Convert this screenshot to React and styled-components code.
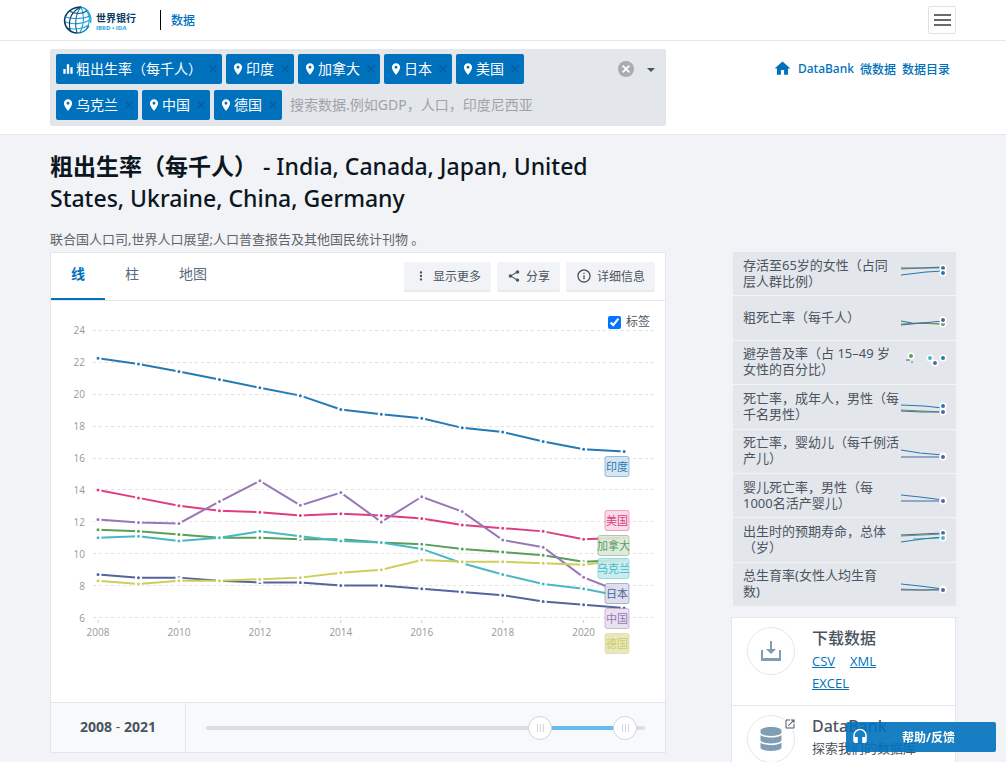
import React, { useState } from "react";
import styled, { createGlobalStyle } from "styled-components";
import {
  MdClose,
  MdEqualizer,
  MdHeadset,
  MdHome,
  MdInfoOutline,
  MdMoreVert,
  MdOpenInNew,
  MdPlace,
  MdShare
} from "react-icons/md";
import { FaDatabase } from "react-icons/fa";

const YEARS = [...Array(14).keys()].map(i => 2008 + i);

// drawn in this order, later ones lie on top
const SERIES = [
  {
    name: "印度",
    color: "#2579b5",
    tint: "#d1e2ee",
    labelY: 156,
    values: [22.25, 21.9, 21.42, 20.92, 20.4, 19.91, 19.04, 18.75, 18.49, 17.89, 17.63, 17.03, 16.55, 16.4]
  },
  {
    name: "加拿大",
    color: "#5a9e57",
    tint: "#dce8db",
    labelY: 235,
    values: [11.5, 11.4, 11.2, 11, 11, 10.9, 10.9, 10.7, 10.6, 10.3, 10.1, 9.9, 9.5, 9.6]
  },
  {
    name: "日本",
    color: "#53659b",
    tint: "#dadeeb",
    labelY: 283,
    values: [8.7, 8.5, 8.5, 8.3, 8.2, 8.2, 8, 8, 7.8, 7.6, 7.4, 7, 6.8, 6.6]
  },
  {
    name: "美国",
    color: "#df3d82",
    tint: "#f6d8e4",
    labelY: 210,
    values: [14, 13.5, 13, 12.7, 12.6, 12.4, 12.5, 12.4, 12.2, 11.8, 11.6, 11.4, 10.9, 11]
  },
  {
    name: "乌克兰",
    color: "#47b8c4",
    tint: "#c3eaee",
    labelY: 258,
    values: [11, 11.1, 10.8, 11, 11.4, 11.1, 10.8, 10.7, 10.3, 9.4, 8.7, 8.1, 7.8, 7.3]
  },
  {
    name: "中国",
    color: "#9877b7",
    tint: "#e6dfee",
    labelY: 308,
    values: [12.14, 11.95, 11.9, 13.27, 14.57, 13.03, 13.83, 11.99, 13.57, 12.64, 10.86, 10.41, 8.52, 7.52]
  },
  {
    name: "德国",
    color: "#cfce5c",
    tint: "#e4e5bd",
    labelY: 333,
    values: [8.3, 8.1, 8.3, 8.3, 8.4, 8.5, 8.8, 9, 9.6, 9.5, 9.5, 9.4, 9.3, 9.6]
  }
];

const RELATED = [
  {
    title: "存活至65岁的女性（占同层人群比例）",
    lines: [["#5a9e57", "1,17 22,16 43,16"], ["#53659b", "1,16 22,16 43,15"], ["#2579b5", "1,23 26,20 43,19"]],
    dots: [["#53659b", 43, 16], ["#2579b5", 43, 21]]
  },
  {
    title: "粗死亡率（每千人）",
    lines: [["#2579b5", "1,24 12,26 43,27"], ["#5a9e57", "1,27 22,26 43,27"], ["#53659b", "1,28 22,26 43,24"]],
    dots: [["#5a9e57", 43, 27], ["#53659b", 43, 23]]
  },
  {
    title: "避孕普及率（占 15–49 岁女性的百分比）",
    lines: [["#53659b", "6,19 10,19"], ["#2579b5", "11,21 13,21"]],
    dots: [["#5a9e57", 11, 15], ["#47b8c4", 30, 17], ["#53659b", 35, 22], ["#2579b5", 43, 17]]
  },
  {
    title: "死亡率，成年人，男性（每千名男性）",
    lines: [["#2579b5", "1,20 24,21 43,23"], ["#5a9e57", "1,25 22,26 43,27"], ["#53659b", "1,26 22,27 43,27"]],
    dots: [["#2579b5", 43, 21], ["#53659b", 43, 27]]
  },
  {
    title: "死亡率，婴幼儿（每千例活产儿）",
    lines: [["#2579b5", "1,20 20,23 43,25"], ["#53659b", "1,27 22,27 43,27"]],
    dots: [["#2579b5", 43, 26], ["#53659b", 43, 27]]
  },
  {
    title: "婴儿死亡率，男性（每1000名活产婴儿）",
    lines: [["#2579b5", "1,21 20,23 43,26"], ["#53659b", "1,27 22,27 43,27"]],
    dots: [["#2579b5", 43, 26], ["#53659b", 43, 27]]
  },
  {
    title: "出生时的预期寿命，总体（岁）",
    lines: [
      ["#5a9e57", "1,18 22,17 43,16"],
      ["#53659b", "1,17 22,16 43,15"],
      ["#47b8c4", "13,21 43,20"],
      ["#2579b5", "1,24 22,21 43,19"]
    ],
    dots: [["#53659b", 43, 15], ["#47b8c4", 43, 20]]
  },
  {
    title: "总生育率(女性人均生育\n数)",
    lines: [["#2579b5", "1,21 20,23 43,26"], ["#5a9e57", "1,26 22,27 43,26"], ["#53659b", "1,27 22,27 43,27"]],
    dots: [["#2579b5", 43, 26], ["#53659b", 43, 27]]
  }
];

const COUNTRIES = ["印度", "加拿大", "日本", "美国", "乌克兰", "中国", "德国"];

const xOf = year => 47 + (year - 2008) * 40.47;
const yOf = value => 316.5 - (value - 6) * 15.95;

const Logo = () => (
  <LogoLink href="/" aria-label="世界银行">
    <svg width="76" height="30" viewBox="0 0 76 30">
      <g fill="none" strokeWidth="1.1">
        <path d="M18 2 A13.2 13.2 0 0 1 27.5 18" stroke="#1ba3dc" strokeWidth="1.3" />
        <path d="M22 4 C27 9 28 16 23 25" stroke="#1ba3dc" />
        <path d="M18 2 C21 8 22 18 17 27" stroke="#1ba3dc" />
        <path d="M2 17 C10 20 20 19 27 15" stroke="#1ba3dc" />
        <path d="M4 23 C11 25 20 24 26 20" stroke="#1ba3dc" />
        <path d="M18 2 C9 2 2 8 1.6 15 C1.4 22 7 28 14 28" stroke="#0a3a5f" strokeWidth="1.6" />
        <path d="M14 28 C19 28 23 26 26 21" stroke="#0f76ae" strokeWidth="1.4" />
        <path d="M18 2 C9 6 5 14 7 25" stroke="#0a3a5f" />
        <path d="M18 2 C13 8 11 18 14 28" stroke="#0f5f92" />
        <path d="M6 6 C12 9 19 9 24 6" stroke="#0f5f92" />
        <path d="M2 12 C10 14 20 14 27 11" stroke="#1a8cc6" />
      </g>
      <LogoName x="33" y="17">世界银行</LogoName>
      <LogoSub x="33" y="25">IBRD • IDA</LogoSub>
    </svg>
  </LogoLink>
);

const Sparkline = ({ lines, dots }) => (
  <svg width="56" height="43" viewBox="0 0 56 43" fill="none">
    {lines.map(([color, points]) => (
      <polyline key={color} points={points} stroke={color} strokeWidth="1.1" />
    ))}
    {dots.map(([color, x, y]) => (
      <circle key={color} cx={x} cy={y} r="2.8" fill={color} stroke="#fff" strokeWidth="1.6" />
    ))}
  </svg>
);

const LineChart = ({ showLabels }) => (
  <ChartSvg viewBox="0 0 614 401" role="img" aria-label="粗出生率（每千人）">
    {[6, 8, 10, 12, 14, 16, 18, 20, 22, 24].map(tick => (
      <g key={tick}>
        <line
          x1="42"
          x2="603"
          y1={Math.floor(yOf(tick)) + 0.5}
          y2={Math.floor(yOf(tick)) + 0.5}
          stroke="#e2e2e2"
          strokeDasharray="3 3"
        />
        <AxisText x="34" y={yOf(tick) + 4} textAnchor="end">
          {tick}
        </AxisText>
      </g>
    ))}
    {YEARS.filter(year => year % 2 === 0).map(year => (
      <g key={year}>
        <line x1={xOf(year)} x2={xOf(year)} y1="319" y2="322" stroke="#ccc" />
        <AxisText x={xOf(year)} y="335" textAnchor="middle">
          {year}
        </AxisText>
      </g>
    ))}
    {SERIES.map(({ name, color, values }) => (
      <g key={name}>
        <polyline
          points={values.map((value, i) => `${xOf(2008 + i)},${yOf(value)}`).join(" ")}
          fill="none"
          stroke={color}
          strokeWidth="2"
        />
        {values.map((value, i) => (
          <circle
            key={i}
            cx={xOf(2008 + i)}
            cy={yOf(value)}
            r="2.5"
            fill={color}
            stroke="#fff"
            strokeWidth="2"
          />
        ))}
      </g>
    ))}
    {showLabels &&
      SERIES.map(({ name, color, tint, labelY }) => {
        const width = name.length === 3 ? 31 : 24;
        return (
          <g key={name}>
            <rect
              x={578 - width}
              y={labelY - 0.5}
              width={width}
              height="20"
              rx="2"
              fill={tint}
              fillOpacity="0.9"
              stroke={color}
              strokeOpacity="0.45"
            />
            <LabelText x={578 - width / 2} y={labelY + 14} fill={color}>
              {name}
            </LabelText>
          </g>
        );
      })}
  </ChartSvg>
);

const RangeSlider = () => {
  const [from, setFrom] = useState(2008);
  const [to, setTo] = useState(2021);
  const min = 1957;
  const max = 2024;
  const percent = year => ((year - min) / (max - min)) * 100;
  return (
    <SliderRow>
      <SliderYears>
        {from} <span>-</span> {to}
      </SliderYears>
      <SliderBox>
        <Track>
          <TrackFill
            style={{ marginLeft: `${percent(from)}%`, width: `${percent(to) - percent(from)}%` }}
          />
        </Track>
        <Range
          type="range"
          aria-label="起始年份"
          min={min}
          max={max}
          value={from}
          onChange={e => setFrom(Math.min(Number(e.target.value), to))}
        />
        <Range
          type="range"
          aria-label="结束年份"
          min={min}
          max={max}
          value={to}
          onChange={e => setTo(Math.max(Number(e.target.value), from))}
        />
      </SliderBox>
    </SliderRow>
  );
};

const App = () => {
  const [tab, setTab] = useState("线");
  const [showLabels, setShowLabels] = useState(true);
  return (
    <>
      <GlobalStyle />
      <Header>
        <Logo />
        <Divider />
        <HeaderLink href="/data">数据</HeaderLink>
        <MenuButton aria-label="菜单">
          <svg width="17" height="12" viewBox="0 0 17 12" fill="#6a6a6a">
            <rect width="17" height="2" />
            <rect y="5" width="17" height="2" />
            <rect y="10" width="17" height="2" />
          </svg>
        </MenuButton>
      </Header>

      <SearchSection>
        <SearchBox>
          <Tags>
            <Tag>
              <MdEqualizer size={14} />
              <span>粗出生率（每千人）</span>
              <TagClose aria-label="移除">
                <MdClose size={14} />
              </TagClose>
            </Tag>
            {COUNTRIES.map(name => (
              <Tag key={name}>
                <MdPlace size={14} />
                <span>{name}</span>
                <TagClose aria-label="移除">
                  <MdClose size={14} />
                </TagClose>
              </Tag>
            ))}
            <SearchInput
              aria-label="搜索数据"
              placeholder="搜索数据.例如GDP，人口，印度尼西亚"
            />
          </Tags>
          <ClearButton aria-label="清除">
            <MdClose size={12} />
          </ClearButton>
          <CaretButton aria-label="展开">
            <svg width="8" height="5" viewBox="0 0 8 5">
              <path d="M0 0H8L4 4Z" fill="#4a5560" />
            </svg>
          </CaretButton>
        </SearchBox>
        <TopNav>
          <NavLink href="/" aria-label="首页">
            <MdHome size={19} />
          </NavLink>
          <NavLink href="/databank">DataBank</NavLink>
          <NavLink href="/microdata">微数据</NavLink>
          <NavLink href="/catalog">数据目录</NavLink>
        </TopNav>
      </SearchSection>

      <Content>
        <main>
          <Title>
            <strong>粗出生率（每千人）</strong> - India, Canada, Japan, United States, Ukraine,
            China, Germany
          </Title>
          <Source>联合国人口司,世界人口展望;人口普查报告及其他国民统计刊物 。</Source>
          <ChartCard>
            <ChartHeader>
              {["线", "柱", "地图"].map(name => (
                <Tab key={name} $active={tab === name} onClick={() => setTab(name)}>
                  {name}
                </Tab>
              ))}
              <Actions>
                <ActionButton>
                  <MdMoreVert size={14} />
                  显示更多
                </ActionButton>
                <ActionButton>
                  <MdShare size={14} />
                  分享
                </ActionButton>
                <ActionButton>
                  <MdInfoOutline size={16} />
                  详细信息
                </ActionButton>
              </Actions>
            </ChartHeader>
            <ChartBody>
              <LineChart showLabels={showLabels} />
              <LabelToggle>
                <input
                  type="checkbox"
                  checked={showLabels}
                  onChange={e => setShowLabels(e.target.checked)}
                />
                标签
              </LabelToggle>
            </ChartBody>
            <RangeSlider />
          </ChartCard>
        </main>

        <Sidebar>
          <RelatedList>
            {RELATED.map(item => (
              <RelatedItem key={item.title}>
                <RelatedLink href="#related">
                  <span>{item.title}</span>
                  <Sparkline lines={item.lines} dots={item.dots} />
                </RelatedLink>
              </RelatedItem>
            ))}
          </RelatedList>
          <DownloadCard>
            <DownloadRow>
              <RoundIcon>
                <svg width="22" height="22" viewBox="0 0 22 22" fill="#7f9db3">
                  <path d="M10 1h2v8h4l-5 5-5-5h4z" />
                  <path d="M1 10h2v8h16v-8h2v11H1z" />
                </svg>
              </RoundIcon>
              <div>
                <RowTitle>下载数据</RowTitle>
                <FileLinks>
                  <a href="#csv">CSV</a>
                  <a href="#xml">XML</a>
                  <a href="#excel">EXCEL</a>
                </FileLinks>
              </div>
            </DownloadRow>
            <DownloadRow>
              <RoundIcon>
                <FaDatabase size={24} />
                <ExternalMark>
                  <MdOpenInNew size={12} />
                </ExternalMark>
              </RoundIcon>
              <div>
                <RowTitle>DataBank</RowTitle>
                <RowText>探索我们的数据库</RowText>
              </div>
            </DownloadRow>
          </DownloadCard>
        </Sidebar>
      </Content>

      <HelpButton>
        <MdHeadset size={18} />
        <span>帮助/反馈</span>
      </HelpButton>
    </>
  );
};
export default App;

const GlobalStyle = createGlobalStyle`
  * {
    box-sizing: border-box;
  }
  html {
    scrollbar-width: none;
  }
  body {
    margin: 0;
    background: #f1f3f7;
    color: #4a5560;
    font-family: "Noto Sans", "Noto Sans CJK SC", sans-serif;
    font-size: 13px;
  }
  button, input {
    font-family: inherit;
    margin: 0;
  }
  button {
    border: 0;
    padding: 0;
    cursor: pointer;
  }
  a {
    color: #0071bc;
    text-decoration: none;
  }
`;

const Header = styled.header`
  display: flex;
  align-items: center;
  height: 41px;
  padding: 0 50px;
  background: #fff;
  border-bottom: 1px solid #e3e7eb;
`;

const LogoLink = styled.a`
  display: flex;
  margin-left: 13px;
`;

const LogoName = styled.text`
  font-size: 10px;
  font-weight: 700;
  fill: #0a3a5f;
`;

const LogoSub = styled.text`
  font-family: "Open Sans", sans-serif;
  font-size: 6px;
  font-weight: 700;
  fill: #1ba3dc;
`;

const Divider = styled.span`
  width: 1px;
  height: 20px;
  margin: 0 10px 0 21px;
  background: #000;
`;

const HeaderLink = styled.a`
  font-size: 12px;
  font-weight: 500;
  padding-bottom: 1px;
`;

const MenuButton = styled.button`
  display: flex;
  align-items: center;
  justify-content: center;
  width: 28px;
  height: 28px;
  margin-left: auto;
  background: #fff;
  border: 1px solid #dfe4e8;
  border-radius: 2px;
`;

const SearchSection = styled.section`
  display: grid;
  grid-template-columns: minmax(0, 1fr) 225px;
  column-gap: 65px;
  align-items: start;
  padding: 8px 50px;
  background: #fff;
  border-bottom: 1px solid #e3e7eb;
`;

const SearchBox = styled.div`
  display: flex;
  align-items: flex-start;
  padding: 5px 11px 6px 6px;
  background: #e3e6eb;
  border-radius: 2px;
`;

const Tags = styled.div`
  display: flex;
  flex: 1;
  flex-wrap: wrap;
  gap: 6px 4px;
  margin-right: 16px;
`;

const Tag = styled.span`
  display: flex;
  align-items: center;
  height: 30px;
  padding: 0 2px 0 5px;
  border-radius: 2px;
  background: #0071bc;
  color: #fff;
  font-size: 14px;

  span {
    padding: 0 0 2px 1px;
  }
`;

const TagClose = styled.button`
  display: flex;
  margin-left: 4px;
  background: none;
  color: #055a95;
`;

const SearchInput = styled.input`
  flex: 1;
  min-width: 250px;
  height: 30px;
  padding: 0 4px 2px;
  border: 0;
  outline: 0;
  background: none;
  font-size: 14px;

  &::placeholder {
    color: #a0a3a8;
  }
`;

const ClearButton = styled.button`
  display: flex;
  align-items: center;
  justify-content: center;
  width: 16px;
  height: 16px;
  margin-top: 7px;
  border-radius: 8px;
  background: #a9abae;
  color: #fff;

  path:last-child {
    stroke: #fff;
    stroke-width: 2;
  }
`;

const CaretButton = styled.button`
  display: flex;
  margin: 14px 0 0 13px;
  background: none;
`;

const TopNav = styled.nav`
  display: flex;
  align-items: center;
  justify-content: flex-end;
  gap: 6px;
  height: 39px;
  padding-right: 6px;
`;

const NavLink = styled.a`
  display: flex;
  font-size: 12px;
  font-weight: 500;
`;

const Content = styled.div`
  display: grid;
  grid-template-columns: minmax(0, 1fr) 225px;
  column-gap: 65px;
  padding: 15px 50px 40px;
`;

const Title = styled.h1`
  margin: 0;
  padding-right: 60px;
  color: #0b1620;
  font-size: 23px;
  font-weight: 500;
  line-height: 32px;

  strong {
    font-weight: 700;
  }
`;

const Source = styled.p`
  margin: 15px 0 3px;
  color: #5f6468;
  line-height: 20px;
`;

const ChartCard = styled.section`
  background: #fff;
  border: 1px solid #e3e7eb;
`;

const ChartHeader = styled.div`
  display: flex;
  height: 48px;
  border-bottom: 1px solid #e3e7eb;
`;

const Tab = styled.button`
  height: 47px;
  padding: 0 20px 5px;
  background: none;
  border-bottom: 2px solid ${props => (props.$active ? "#0071bc" : "transparent")};
  color: ${props => (props.$active ? "#0071bc" : "#5b6b79")};
  font-size: 14px;
  font-weight: ${props => (props.$active ? 700 : 400)};
`;

const Actions = styled.div`
  display: flex;
  gap: 6px;
  margin: 9px 10px 0 auto;
`;

const ActionButton = styled.button`
  display: flex;
  align-items: center;
  gap: 5px;
  height: 30px;
  padding: 0 10px;
  background: #f1f3f7;
  border-bottom: 2px solid #e8eaed;
  border-radius: 2px;
  color: #4a5560;
  font-size: 12px;
`;

const ChartBody = styled.div`
  position: relative;
`;

const ChartSvg = styled.svg`
  display: block;
  width: 100%;
  height: auto;
`;

const AxisText = styled.text`
  font-family: "Open Sans", sans-serif;
  font-size: 10px;
  fill: #999;
`;

const LabelText = styled.text`
  font-size: 11px;
  text-anchor: middle;
`;

const LabelToggle = styled.label`
  position: absolute;
  top: 12px;
  right: 15px;
  display: flex;
  align-items: center;
  gap: 5px;
  font-size: 12px;
  line-height: 18px;

  input {
    width: 13px;
    height: 13px;
    accent-color: #0075ff;
  }
`;

const SliderRow = styled.div`
  display: flex;
  height: 50px;
  background: #f8f9fb;
  border-top: 1px solid #e3e7eb;
`;

const SliderYears = styled.div`
  width: 135px;
  border-right: 1px solid #e3e7eb;
  font-family: "Open Sans", sans-serif;
  font-size: 14px;
  font-weight: 700;
  line-height: 48px;
  text-align: center;

  span {
    font-weight: 400;
  }
`;

const SliderBox = styled.div`
  display: grid;
  flex: 1;
  align-items: center;
  padding: 0 8px;
`;

const Track = styled.div`
  grid-area: 1 / 1;
  height: 4px;
  margin: 0 12px;
  border-radius: 2px;
  background: #d9dfe4;
`;

const TrackFill = styled.div`
  height: 4px;
  background: #68bcf0;
`;

const Range = styled.input`
  grid-area: 1 / 1;
  width: 100%;
  height: 24px;
  appearance: none;
  background: none;
  pointer-events: none;

  &::-webkit-slider-thumb {
    appearance: none;
    width: 24px;
    height: 24px;
    border: 1px solid #cfd5da;
    border-radius: 50%;
    background: repeating-linear-gradient(90deg, #d3d7db 0 1px, #fff 1px 3px) center / 7px 8px
      no-repeat #fff;
    pointer-events: auto;
  }
`;

const Sidebar = styled.aside`
  padding-top: 102px;
`;

const RelatedList = styled.ul`
  display: grid;
  grid-auto-rows: 1fr;
  gap: 1px;
  min-height: 354px;
  margin: 0 0 11px 2px;
  padding: 0;
  list-style: none;
`;

const RelatedItem = styled.li`
  display: grid;
  background: #e3e6eb;
`;

const RelatedLink = styled.a`
  display: flex;
  align-items: center;
  padding-left: 10px;
  color: #4a5560;
  line-height: 16px;

  span {
    flex: 1;
    padding-bottom: 2px;
    white-space: pre-line;
  }

  svg {
    flex: none;
  }
`;

const DownloadCard = styled.section`
  background: #fff;
  border: 1px solid #e3e7eb;
`;

const DownloadRow = styled.div`
  display: grid;
  grid-template-columns: 48px 1fr;
  column-gap: 17px;
  padding: 9px 15px 11px;

  & + & {
    border-top: 1px solid #e3e7eb;
  }
`;

const RoundIcon = styled.div`
  position: relative;
  display: flex;
  align-items: center;
  justify-content: center;
  width: 48px;
  height: 48px;
  border: 1px solid #e3e7eb;
  border-radius: 50%;
  color: #7f9db3;
`;

const ExternalMark = styled.span`
  position: absolute;
  top: 2px;
  right: -2px;
  display: flex;
  background: #fff;
  color: #4a5560;
`;

const RowTitle = styled.h2`
  margin: 0;
  font-size: 16px;
  font-weight: 500;
  line-height: 23px;
`;

const FileLinks = styled.div`
  display: flex;
  flex-wrap: wrap;
  column-gap: 15px;
  max-width: 80px;
  line-height: 22px;

  a {
    font-family: "Open Sans", sans-serif;
    text-decoration: underline;
  }
`;

const RowText = styled.p`
  margin: 0;
  line-height: 20px;
`;

const HelpButton = styled.button`
  position: fixed;
  right: 10px;
  bottom: 10px;
  display: flex;
  align-items: center;
  width: 150px;
  height: 30px;
  padding: 0 8px 0 5px;
  background: rgba(0, 113, 188, 0.9);
  border-radius: 2px;
  color: #fff;
  font-size: 12px;
  font-weight: 700;

  span {
    flex: 1;
  }
`;
